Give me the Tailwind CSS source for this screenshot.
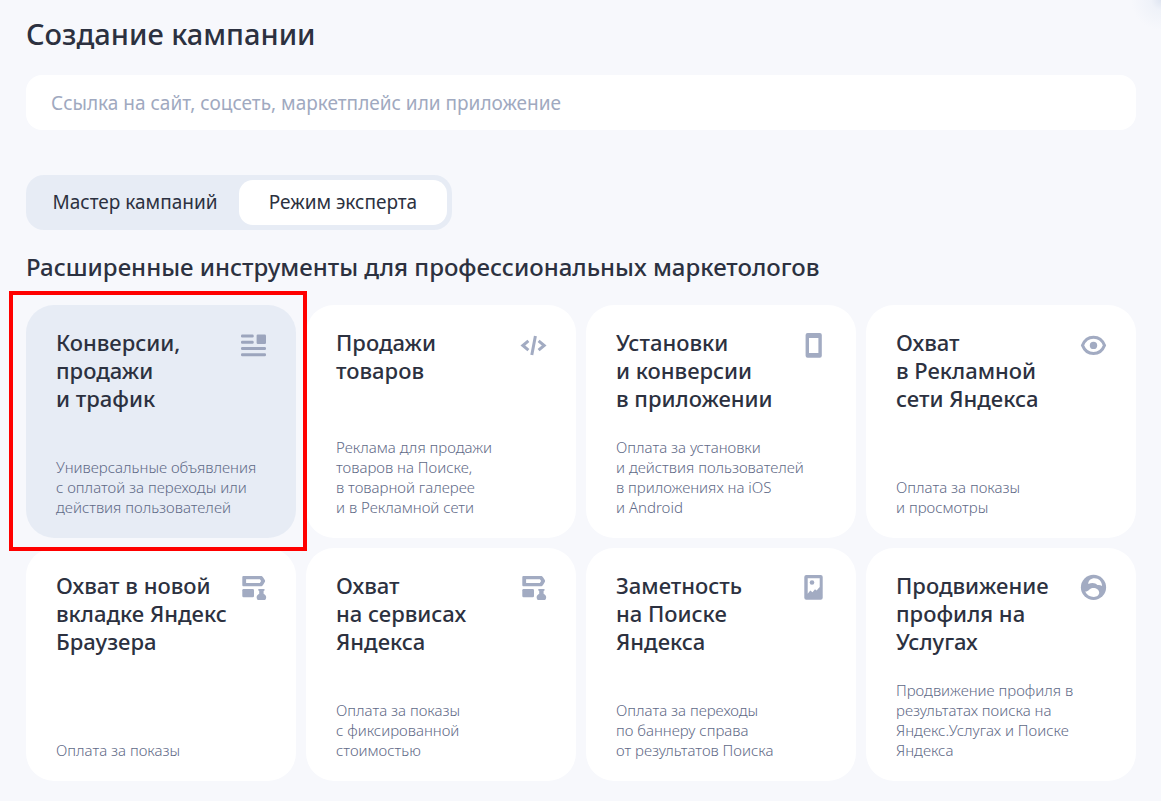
<!DOCTYPE html>
<html lang="ru">
<head>
    <meta charset="UTF-8">
    <meta name="viewport" content="width=device-width, initial-scale=1">
    <title>Создание кампании</title>
    <script src="https://cdn.jsdelivr.net/npm/@tailwindcss/browser@4"></script>
</head>
<body class="min-h-screen bg-[#f7f8fc] bg-[radial-gradient(circle_at_100%_0%,#dfe5f1_0,#eff2f9_10px,#f7f8fc_30px)] bg-no-repeat pl-[26px] pr-[25px] pt-4 pb-5 font-['Noto_Sans',sans-serif] text-[#2c3140]">

    <h1 class="text-[29px] leading-9 font-medium">Создание кампании</h1>

    <input type="url" aria-label="Ссылка" placeholder="Ссылка на сайт, соцсеть, маркетплейс или приложение" class="mt-[23px] block h-[55px] w-full rounded-2xl bg-white px-[25px] text-[19px] placeholder:text-[#a0a9c0] outline-none">

    <div class="mt-[45px] flex h-[55px] w-fit rounded-[18px] bg-[#e7ecf5] p-[5px] text-[19px]">
        <button class="w-[208px]">Мастер кампаний</button>
        <button class="w-[208px] rounded-[14px] bg-white">Режим эксперта</button>
    </div>

    <h2 class="mt-[22px] text-2xl leading-[30px] font-medium">Расширенные инструменты для профессиональных маркетологов</h2>

    <div class="mt-[23px] grid grid-cols-4 gap-[10px]">

        <a href="#" class="relative flex min-h-[233px] flex-col justify-between rounded-[28px] bg-[#e7ecf5] pt-[23px] pb-[21px] pl-[30px] pr-7">
            <div class="flex justify-between">
                <h3 class="text-[22px] leading-7 font-medium whitespace-nowrap">Конверсии,<br>продажи<br>и трафик</h3>
                <svg class="mt-[3px] size-7 shrink-0 fill-[#9ca5bd]" viewBox="0 0 28 28">
                    <rect x="1" y="3.5" width="12.7" height="3" rx="1.2"/>
                    <rect x="1" y="9.8" width="12.7" height="3" rx="1.2"/>
                    <rect x="16.6" y="3.5" width="9.4" height="9.4" rx="1.2"/>
                    <rect x="1" y="16" width="25" height="3" rx="1.2"/>
                    <rect x="1" y="22.2" width="25" height="3" rx="1.2"/>
                </svg>
            </div>
            <p class="text-[15px] leading-5 font-light whitespace-nowrap text-[#5f6a87]">Универсальные объявления<br>с оплатой за переходы или<br>действия пользователей</p>
            <span class="pointer-events-none absolute -top-[14px] -right-[11px] -bottom-[13px] -left-[17px] z-10 border-4 border-[#ff0000]"></span>
        </a>

        <a href="#" class="flex min-h-[233px] flex-col justify-between rounded-[28px] bg-white pt-[23px] pb-[21px] pl-[30px] pr-7">
            <div class="flex justify-between">
                <h3 class="text-[22px] leading-7 font-medium whitespace-nowrap">Продажи<br>товаров</h3>
                <svg class="mt-[3px] size-7 shrink-0 fill-none stroke-[#a2abc2] stroke-3" viewBox="0 0 28 28">
                    <path d="M8.4 9.8 2.8 14.5l5.6 4.7M18.6 9.8l5.6 4.7-5.6 4.7M15.4 5l-3.6 19"/>
                </svg>
            </div>
            <p class="text-[15px] leading-5 font-light whitespace-nowrap text-[#5f6a87]">Реклама для продажи<br>товаров на Поиске,<br>в товарной галерее<br>и в Рекламной сети</p>
        </a>

        <a href="#" class="flex min-h-[233px] flex-col justify-between rounded-[28px] bg-white pt-[23px] pb-[21px] pl-[30px] pr-7">
            <div class="flex justify-between">
                <h3 class="text-[22px] leading-7 font-medium whitespace-nowrap">Установки<br>и конверсии<br>в приложении</h3>
                <svg class="mt-[3px] size-7 shrink-0 fill-[#a2abc2]" viewBox="0 0 28 28">
                    <path fill-rule="evenodd" d="M7.6 2h12.2a2 2 0 0 1 2 2v20.7a2 2 0 0 1-2 2H7.6a2 2 0 0 1-2-2V4a2 2 0 0 1 2-2ZM9 7v15h9.4V7Z"/>
                </svg>
            </div>
            <p class="text-[15px] leading-5 font-light whitespace-nowrap text-[#5f6a87]">Оплата за установки<br>и действия пользователей<br>в приложениях на iOS<br>и Android</p>
        </a>

        <a href="#" class="flex min-h-[233px] flex-col justify-between rounded-[28px] bg-white pt-[23px] pb-[21px] pl-[30px] pr-7">
            <div class="flex justify-between">
                <h3 class="text-[22px] leading-7 font-medium whitespace-nowrap">Охват<br>в Рекламной<br>сети Яндекса</h3>
                <svg class="mt-[3px] size-7 shrink-0 fill-[#a2abc2]" viewBox="0 0 28 28">
                    <path class="fill-none stroke-[#a2abc2] stroke-3" d="M2.500 14.400C4.600 9 8.600 6.300 13.500 6.300s8.900 2.700 11 8.100c-2.100 5.400-6.100 8.100-11 8.100s-8.900-2.700-11-8.100Z"/>
                    <circle cx="13.5" cy="14.4" r="3.7"/>
                </svg>
            </div>
            <p class="text-[15px] leading-5 font-light whitespace-nowrap text-[#5f6a87]">Оплата за показы<br>и просмотры</p>
        </a>

        <a href="#" class="flex min-h-[233px] flex-col justify-between rounded-[28px] bg-white pt-[23px] pb-[21px] pl-[30px] pr-7">
            <div class="flex justify-between">
                <h3 class="text-[22px] leading-7 font-medium whitespace-nowrap">Охват в новой<br>вкладке Яндекс<br>Браузера</h3>
                <svg class="mt-[3px] size-7 shrink-0 fill-[#a2abc2]" viewBox="0 0 28 28">
                    <path fill-rule="evenodd" d="M3.6 2h17.2c1 0 1.6.4 2.200 1.200l1.800 2.900c.4.700.4 1.300 0 2L23 11c-.6.900-1.200 1.200-2.200 1.200H3.600c-.8 0-1.300-.5-1.300-1.300V3.300C2.300 2.500 2.800 2 3.600 2Zm2.500 3.300v3.600h13.800l1.200-1.800-1.200-1.800Z"/>
                    <rect x="2.3" y="15" width="11.7" height="8.2" rx="1.2"/>
                    <path d="M18.300 15h6.200v1.600l-.9.5v2.600c1.500.9 2.600 2.100 2.600 3.500 0 .9-.4 1.900-1.100 2.800h-7.400c-.7-.9-1.100-1.900-1.100-2.800 0-1.400 1.100-2.600 2.600-3.500v-2.600l-.9-.5Z"/>
                </svg>
            </div>
            <p class="text-[15px] leading-5 font-light whitespace-nowrap text-[#5f6a87]">Оплата за показы</p>
        </a>

        <a href="#" class="flex min-h-[233px] flex-col justify-between rounded-[28px] bg-white pt-[23px] pb-[21px] pl-[30px] pr-7">
            <div class="flex justify-between">
                <h3 class="text-[22px] leading-7 font-medium whitespace-nowrap">Охват<br>на сервисах<br>Яндекса</h3>
                <svg class="mt-[3px] size-7 shrink-0 fill-[#a2abc2]" viewBox="0 0 28 28">
                    <path fill-rule="evenodd" d="M3.600 2h17.200c1 0 1.600.4 2.200 1.200l1.800 2.900c.4.700.4 1.300 0 2L23 11c-.6.900-1.200 1.200-2.200 1.200H3.600c-.8 0-1.300-.5-1.300-1.300V3.300C2.300 2.500 2.800 2 3.600 2Zm2.500 3.300v3.600h13.800l1.200-1.800-1.200-1.800Z"/>
                    <rect x="2.3" y="15" width="11.7" height="8.2" rx="1.2"/>
                    <path d="M18.300 15h6.200v1.600l-.9.5v2.600c1.500.9 2.600 2.100 2.600 3.500 0 .9-.4 1.900-1.100 2.800h-7.400c-.7-.9-1.100-1.900-1.100-2.800 0-1.400 1.100-2.600 2.600-3.500v-2.600l-.9-.5Z"/>
                </svg>
            </div>
            <p class="text-[15px] leading-5 font-light whitespace-nowrap text-[#5f6a87]">Оплата за показы<br>с фиксированной<br>стоимостью</p>
        </a>

        <a href="#" class="flex min-h-[233px] flex-col justify-between rounded-[28px] bg-white pt-[23px] pb-[21px] pl-[30px] pr-7">
            <div class="flex justify-between">
                <h3 class="text-[22px] leading-7 font-medium whitespace-nowrap">Заметность<br>на Поиске<br>Яндекса</h3>
                <svg class="mt-[3px] size-7 shrink-0 fill-[#a2abc2]" viewBox="0 0 28 28">
                    <path fill-rule="evenodd" d="M6.300 1h14.400a2 2 0 0 1 2 2v20.700a2 2 0 0 1-2 2H6.300a2 2 0 0 1-2-2V3a2 2 0 0 1 2-2ZM7.700 4.300v15.500l2.600-3.300 2.200 1.800 2.500-3 1.600 1.200 3.100-3.500V4.300Z"/>
                    <circle cx="12" cy="8.5" r="2.3"/>
                </svg>
            </div>
            <p class="text-[15px] leading-5 font-light whitespace-nowrap text-[#5f6a87]">Оплата за переходы<br>по баннеру справа<br>от результатов Поиска</p>
        </a>

        <a href="#" class="flex min-h-[233px] flex-col justify-between rounded-[28px] bg-white pt-[23px] pb-[21px] pl-[30px] pr-7">
            <div class="flex justify-between">
                <h3 class="text-[22px] leading-7 font-medium whitespace-nowrap">Продвижение<br>профиля на<br>Услугах</h3>
                <svg class="mt-[3px] size-7 shrink-0 fill-[#a2abc2]" viewBox="0 0 28 28">
                    <circle cx="13.5" cy="13.4" r="12.6"/>
                    <path class="fill-white" d="M8.300 10C8 6.500 11 4.200 14.500 4.200c4.300 0 7.300 3 7.600 7.700-1.700-.9-3.100-1-4.600-.8-2-2.200-5.600-2.700-9.200-1.100ZM5.200 17.600c1.900-.2 2.900-.9 4-1.900 1.200-1.200 2.400-1.800 4-1.800 3.300 0 6 1.900 6 4.600 0 2.600-2.300 4.400-5.300 4.400-4 0-7.300-1.700-8.700-5.300Z"/>
                </svg>
            </div>
            <p class="text-[15px] leading-5 font-light whitespace-nowrap text-[#5f6a87]">Продвижение профиля в<br>результатах поиска на<br>Яндекс.Услугах и Поиске<br>Яндекса</p>
        </a>

    </div>

</body>
</html>
